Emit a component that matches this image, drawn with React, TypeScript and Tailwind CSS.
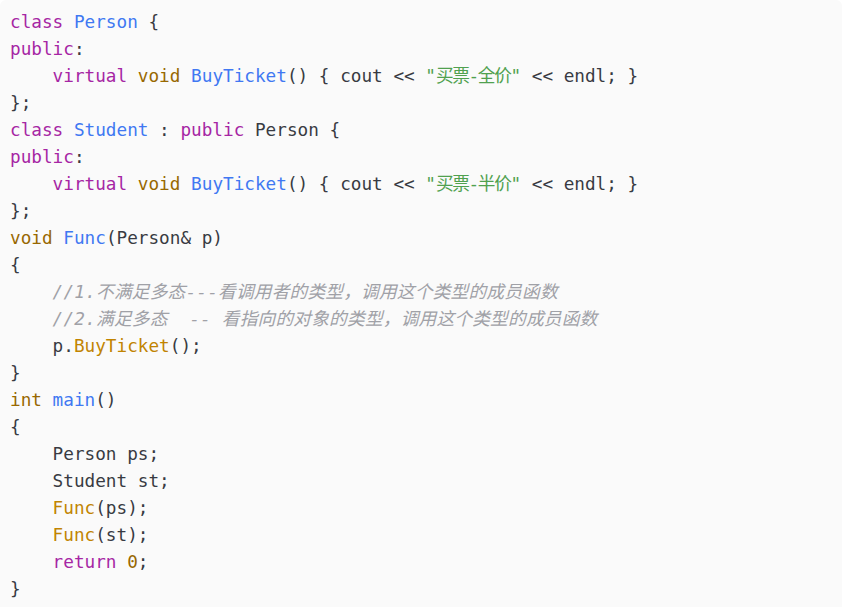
type Tok = [string, string];

const K = "text-[#a626a4]"; // keyword
const T = "text-[#4078f2]"; // title
const Y = "text-[#986801]"; // type / number
const F = "text-[#c18401]"; // call
const S = "text-[#50a14f]"; // string
const SC = "text-[#50a14f] tracking-[-1.4px]"; // string, cjk part
const C = "text-[#a0a1a7] italic tracking-[0.2px]"; // comment
const P = ""; // plain

const lines: Tok[][] = [
  [[K, "class"], [P, " "], [T, "Person"], [P, " {"]],
  [[K, "public"], [P, ":"]],
  [[P, "    "], [K, "virtual"], [P, " "], [Y, "void"], [P, " "], [T, "BuyTicket"], [P, "() { cout << "], [S, "\""], [SC, "买票-全价"], [S, "\""], [P, " << endl; }"]],
  [[P, "};"]],
  [[K, "class"], [P, " "], [T, "Student"], [P, " : "], [K, "public"], [P, " Person {"]],
  [[K, "public"], [P, ":"]],
  [[P, "    "], [K, "virtual"], [P, " "], [Y, "void"], [P, " "], [T, "BuyTicket"], [P, "() { cout << "], [S, "\""], [SC, "买票-半价"], [S, "\""], [P, " << endl; }"]],
  [[P, "};"]],
  [[Y, "void"], [P, " "], [T, "Func"], [P, "(Person& p)"]],
  [[P, "{"]],
  [[P, "    "], [C, "//1.不满足多态---看调用者的类型，调用这个类型的成员函数"]],
  [[P, "    "], [C, "//2.满足多态  -- 看指向的对象的类型，调用这个类型的成员函数"]],
  [[P, "    p."], [F, "BuyTicket"], [P, "();"]],
  [[P, "}"]],
  [[Y, "int"], [P, " "], [T, "main"], [P, "()"]],
  [[P, "{"]],
  [[P, "    Person ps;"]],
  [[P, "    Student st;"]],
  [[P, "    "], [F, "Func"], [P, "(ps);"]],
  [[P, "    "], [F, "Func"], [P, "(st);"]],
  [[P, "    "], [K, "return"], [P, " "], [Y, "0"], [P, ";"]],
  [[P, "}"]],
];

export default function App() {
  return (
    <div className="min-h-screen bg-white">
      <pre
        className="w-[842px] min-h-[620px] rounded-md bg-[#fafafa] pl-[10px] pt-[9px] text-[17.7px] leading-[27px] text-[#383a42]"
        style={{ fontFamily: '"DejaVu Sans Mono", "Noto Sans CJK SC", monospace' }}
      >
        {lines.map((line, i) => (
          <div key={i} className="h-[27px] whitespace-pre">
            {line.map(([cls, txt], j) => (
              <span key={j} className={cls}>
                {txt}
              </span>
            ))}
          </div>
        ))}
      </pre>
    </div>
  );
}
